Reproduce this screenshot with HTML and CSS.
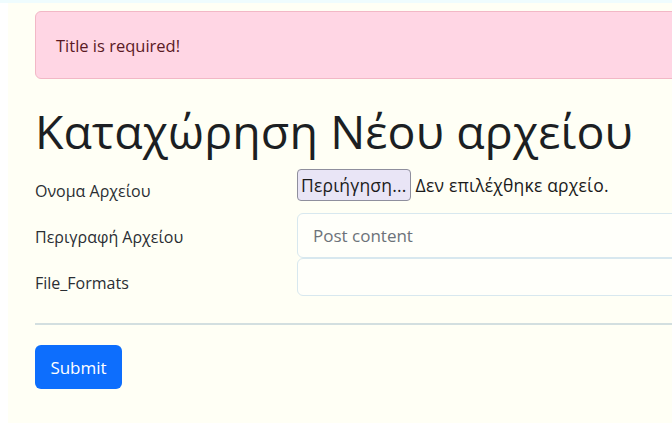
FILE: index.html
```html
<!DOCTYPE html>
<html lang="el">
<head>
<meta charset="utf-8">
<title>Καταχώρηση Νέου αρχείου</title>
<link rel="stylesheet" href="styles.css">
</head>
<body>
  <div class="topbar"></div>
  <main class="page">
    <div class="alert">Title is required!</div>
    <h1 class="title">Καταχώρηση Νέου αρχείου</h1>
    <form class="form">
      <div class="row row-file">
        <label class="label">Ονομα Αρχείου</label>
        <div class="field file-field">
          <span class="file-btn">Περιήγηση...</span>
          <span class="file-name">Δεν επιλέχθηκε αρχείο.</span>
        </div>
      </div>
      <div class="row row-desc">
        <label class="label">Περιγραφή Αρχείου</label>
        <div class="field"><div class="input input-tall placeholder">Post content</div></div>
      </div>
      <div class="row row-fmt">
        <label class="label">File_Formats</label>
        <div class="field"><div class="input"></div></div>
      </div>
      <hr class="divider">
      <button type="button" class="btn">Submit</button>
    </form>
  </main>
</body>
</html>
```

FILE: styles.css
```css
html, body {
  margin: 0;
  padding: 0;
  background: #ffffff;
  overflow: hidden;
  height: 100%;
}

body {
  font-family: "Open Sans", "Noto Sans", sans-serif;
  color: #212529;
}

.topbar {
  height: 3px;
  background: #effcfe;
}

.page {
  box-sizing: border-box;
  height: calc(100vh - 3px);
  margin-left: 8px;
  background: #fffff5;
  padding: 8px 0 0 27px;
  overflow: hidden;
}

.alert {
  box-sizing: border-box;
  height: 68px;
  margin-right: -20px;
  padding: 22px 20px 0;
  background: #ffd6e4;
  border: 1px solid #f2b8c6;
  border-radius: 6px;
  color: #5a1a24;
  font-size: 16.5px;
  line-height: 24px;
}

.title {
  margin: 22px 0 0;
  font-weight: 400;
  font-size: 46.5px;
  line-height: 60px;
  color: #1c1f23;
  letter-spacing: 0.1px;
  white-space: nowrap;
}

.form {
  margin-top: 6px;
}

.row {
  display: flex;
}

.label {
  width: 262px;
  flex: none;
  font-size: 16px;
  line-height: 28px;
  color: #2a2e33;
}

.field {
  flex: 1;
  margin-right: -20px;
}

.row-file {
  height: 46px;
}
.row-file .label { padding-top: 10px; }

.file-field {
  display: flex;
  align-items: center;
  height: 32px;
  margin-top: 2px;
  white-space: nowrap;
}

.file-btn {
  box-sizing: border-box;
  height: 32px;
  padding: 0 3px;
  display: flex;
  align-items: center;
  background: #e9e5f6;
  border: 1px solid #8f8f9d;
  border-radius: 4px;
  font-size: 17.5px;
  letter-spacing: 0.2px;
  color: #1b1b1b;
}

.file-name {
  margin-left: 5px;
  font-size: 17.5px;
  letter-spacing: 0.2px;
  color: #1b1b1b;
}

.row-desc { height: 45px; }
.row-desc .label { padding-top: 10px; }

.row-fmt { height: 39px; }
.row-fmt .label { padding-top: 11px; }

.input {
  box-sizing: border-box;
  height: 38px;
  background: #fffffa;
  border: 1px solid #d8e8ef;
  border-radius: 6px;
}

.input-tall {
  height: 45px;
}

.placeholder {
  padding: 0 15px;
  display: flex;
  align-items: center;
  font-size: 17px;
  color: #6c7279;
}

.divider {
  margin: 26px -20px 0 0;
  border: 0;
  border-top: 2px solid #d3dfe0;
}

.btn {
  margin-top: 20px;
  box-sizing: border-box;
  width: 87px;
  height: 44px;
  border: 0;
  border-radius: 6px;
  background: #0d6efd;
  color: #ffffff;
  font-family: inherit;
  font-size: 17px;
  padding: 0;
}
```
